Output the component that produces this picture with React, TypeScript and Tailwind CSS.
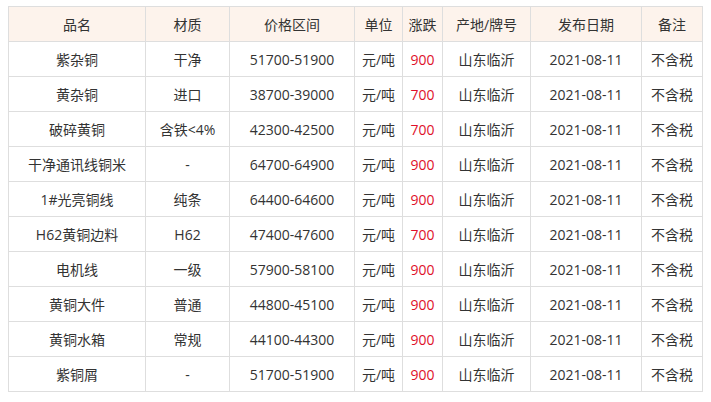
const headers = ["品名", "材质", "价格区间", "单位", "涨跌", "产地/牌号", "发布日期", "备注"];
const widths = ["w-[137px]", "w-[84px]", "w-[125px]", "w-[48px]", "w-[40px]", "w-[88px]", "w-[111px]", "w-[61px]"];

const rows = [
  { name: "紫杂铜", grade: "干净", price: "51700-51900", change: "900" },
  { name: "黄杂铜", grade: "进口", price: "38700-39000", change: "700" },
  { name: "破碎黄铜", grade: "含铁<4%", price: "42300-42500", change: "700" },
  { name: "干净通讯线铜米", grade: "-", price: "64700-64900", change: "900" },
  { name: "1#光亮铜线", grade: "纯条", price: "64400-64600", change: "900" },
  { name: "H62黄铜边料", grade: "H62", price: "47400-47600", change: "700" },
  { name: "电机线", grade: "一级", price: "57900-58100", change: "900" },
  { name: "黄铜大件", grade: "普通", price: "44800-45100", change: "900" },
  { name: "黄铜水箱", grade: "常规", price: "44100-44300", change: "900" },
  { name: "紫铜屑", grade: "-", price: "51700-51900", change: "900" },
];

const cell = "border border-[#dedede] text-center p-0";

export default function App() {
  return (
    <div className="w-[711px] h-[402px] bg-white pt-[6px] pl-[8px] font-['Open_Sans','Noto_Sans_CJK_SC',sans-serif] text-[14px] text-[#333]">
      <table className="table-fixed border-collapse w-[695px]">
        <thead>
          <tr className="h-[35px] bg-[#fdf3ec]">
            {headers.map((h, i) => (
              <th key={h} className={`${cell} ${widths[i]} font-normal`}>
                {h}
              </th>
            ))}
          </tr>
        </thead>
        <tbody>
          {rows.map((r, idx) => (
            <tr key={idx} className="h-[35px]">
              <td className={cell}>{r.name}</td>
              <td className={cell}>{r.grade}</td>
              <td className={cell}>{r.price}</td>
              <td className={cell}>元/吨</td>
              <td className={`${cell} text-[#e0102a]`}>{r.change}</td>
              <td className={cell}>山东临沂</td>
              <td className={cell}>2021-08-11</td>
              <td className={cell}>不含税</td>
            </tr>
          ))}
        </tbody>
      </table>
    </div>
  );
}
